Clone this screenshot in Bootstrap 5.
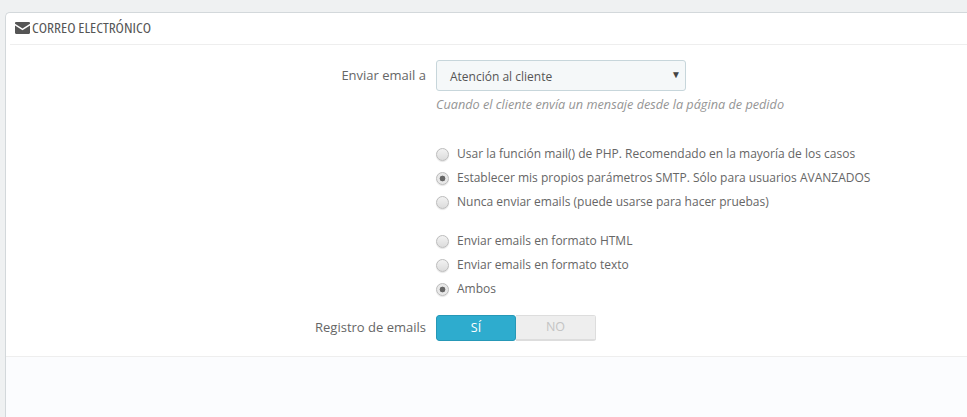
<!DOCTYPE html>
<html lang="es">
<head>
<meta charset="utf-8">
<title>Correo electrónico</title>
<link rel="stylesheet" href="https://cdn.jsdelivr.net/npm/bootstrap@5.3.0/dist/css/bootstrap.min.css">
<style>
html,body{height:417px;overflow:hidden}
body{background:#eff1f2;font-family:"Open Sans",sans-serif;font-size:12px;color:#666;padding:12px 0 0 5px}
.mail-panel{background:#fff;border:1px solid #d3d8db;border-right:0;border-bottom:0;border-top-left-radius:5px;height:405px;display:flex;flex-direction:column}
.mail-head{height:32px;margin-left:4px;border-bottom:1px solid #eee;display:flex;align-items:center;gap:2px;padding-left:5px;padding-bottom:1px;font-family:"Open Sans",sans-serif;font-stretch:75%;font-size:15.3px;color:#555;line-height:1}
.mail-head svg{width:15px;height:12px;flex:none}
.mail-body{height:311px;padding-top:15px}
.mail-foot{flex:1;background:#fbfcfe;border-top:1px solid #eee}
.lbl-col{width:430px;flex:none;text-align:right;padding-right:10px;font-size:13px;color:#666}
.fld-col{width:250px;flex:none}
.fake-select{height:31px;width:250px;background:#f5f8f9;border:1px solid #c7d6db;border-radius:3px;padding:2px 4px 0 13px;display:flex;align-items:center;justify-content:space-between;color:#555;font-size:12px}
.fake-select i{font-style:normal;font-size:10px;color:#444;margin-top:-5px}
.help-txt{font-style:italic;color:#959595;font-size:12.7px;margin-top:5px;line-height:17px;white-space:nowrap}
.opt-list{margin-left:430px;white-space:nowrap}
.opt-row{height:24px;display:flex;align-items:center;gap:8px;font-size:12px;color:#666}
.opt-dot{width:13px;height:13px;border-radius:50%;flex:none;background:linear-gradient(#f2f2f2,#dcdcdc);border:1px solid #bcbcbc;box-shadow:0 1px 1px #e4e4e4}
.opt-dot.on{background:radial-gradient(circle,#666 0 2.6px,#e8e8e8 3.2px)}
.sw-box{width:160px;height:26px;display:flex;border-radius:3px;font-size:12.5px;overflow:hidden}
.sw-si{width:80px;background:#2eacce;border:1px solid #2698b7;border-radius:3px;color:#fff;display:flex;align-items:center;justify-content:center}
.sw-no{width:80px;background:#eee;border:1px solid #ddd;border-left:0;border-bottom:2px solid #ddd;color:#c4c4c4;display:flex;align-items:center;justify-content:center}
.grp-one{margin-top:29px}
.grp-two{margin-top:15px}
.sw-line{margin-top:14px}
</style>
</head>
<body>
<div class="mail-panel">
  <div class="mail-head">
    <svg viewBox="0 0 15 12"><path fill="#555" d="M0 1.2C0 .5.5 0 1.2 0h12.6c.7 0 1.2.5 1.2 1.2v.6L7.5 6.6 0 1.8zM0 3.4l7.5 4.8L15 3.4v7.4c0 .7-.5 1.2-1.2 1.2H1.2C.5 12 0 11.500 0 10.800z"/></svg>
    <span>CORREO ELECTRÓNICO</span>
  </div>
  <div class="mail-body">
    <div class="d-flex align-items-center">
      <div class="lbl-col">Enviar email a</div>
      <div class="fld-col"><div class="fake-select"><span>Atención al cliente</span><i>▼</i></div></div>
    </div>
    <div class="help-txt opt-list">Cuando el cliente envía un mensaje desde la página de pedido</div>
    <div class="opt-list grp-one">
      <div class="opt-row"><span class="opt-dot"></span>Usar la función mail() de PHP. Recomendado en la mayoría de los casos</div>
      <div class="opt-row"><span class="opt-dot on"></span>Establecer mis propios parámetros SMTP. Sólo para usuarios AVANZADOS</div>
      <div class="opt-row"><span class="opt-dot"></span>Nunca enviar emails (puede usarse para hacer pruebas)</div>
    </div>
    <div class="opt-list grp-two">
      <div class="opt-row"><span class="opt-dot"></span>Enviar emails en formato HTML</div>
      <div class="opt-row"><span class="opt-dot"></span>Enviar emails en formato texto</div>
      <div class="opt-row"><span class="opt-dot on"></span>Ambos</div>
    </div>
    <div class="d-flex align-items-center sw-line">
      <div class="lbl-col">Registro de emails</div>
      <div class="sw-box"><div class="sw-si">SÍ</div><div class="sw-no">NO</div></div>
    </div>
  </div>
  <div class="mail-foot"></div>
</div>
<script src="https://cdn.jsdelivr.net/npm/bootstrap@5.3.0/dist/js/bootstrap.bundle.min.js"></script>
</body>
</html>
